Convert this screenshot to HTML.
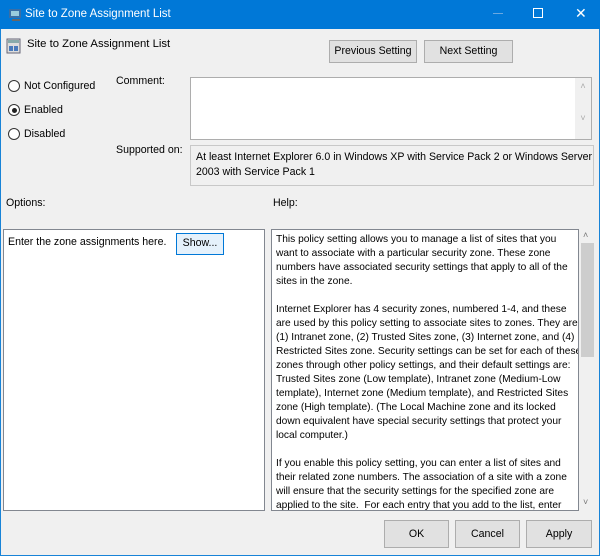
<!DOCTYPE html>
<html><head><style>
*{margin:0;padding:0;box-sizing:border-box}
body{width:600px;height:556px;background:#f0f0f0;font-family:"Liberation Sans",sans-serif;font-size:10.6px;color:#000;position:relative;overflow:hidden}
.a{position:absolute;white-space:nowrap}
.btn{position:absolute;background:#e1e1e1;border:1px solid #adadad;text-align:center;font-size:10.6px}
.box{position:absolute;background:#fff;border:1px solid #adadad}
.rad{position:absolute;width:12px;height:12px;border:1px solid #333;border-radius:50%;background:#fff}
.help div{height:14px}
</style></head><body>
<div class="a" style="left:0;top:0;width:600px;height:556px;border:1px solid #1883d7"></div>
<div class="a" style="left:0;top:0;width:600px;height:29px;background:#0078d7"></div>
<svg class="a" style="left:8px;top:7px" width="16" height="16"><rect x="1" y="2" width="12" height="9" fill="#3a6ea5"/><rect x="3" y="4" width="8" height="5" fill="#9cd"/><rect x="4" y="12" width="8" height="2" fill="#666"/></svg>
<div class="a" style="left:25px;top:8px;color:#fff;font-size:11.5px">Site to Zone Assignment List</div>
<div class="a" style="left:493px;top:13px;width:10px;height:1px;background:#6aa8e0"></div>
<div class="a" style="left:533px;top:8px;width:10px;height:10px;border:1px solid #fff"></div>
<div class="a" style="left:575px;top:5px;color:#fff;font-size:14px">✕</div>
<svg class="a" style="left:6px;top:38px" width="16" height="16"><rect x="1" y="1" width="13" height="14" fill="#ddd" stroke="#667"/><rect x="2" y="2" width="11" height="3" fill="#8aa"/><rect x="3" y="8" width="4" height="5" fill="#4a7bbb"/><rect x="8" y="8" width="4" height="5" fill="#4a7bbb"/></svg>
<div class="a" style="left:27px;top:38px;font-size:11.3px">Site to Zone Assignment List</div>
<div class="btn" style="left:329px;top:40px;width:88px;height:23px;line-height:21px">Previous Setting</div>
<div class="btn" style="left:424px;top:40px;width:89px;height:23px;line-height:21px">Next Setting</div>
<div class="rad" style="left:8px;top:80px"></div><div class="a" style="left:24px;top:80px">Not Configured</div>
<div class="rad" style="left:8px;top:104px"><div style="position:absolute;left:2.5px;top:2.5px;width:5px;height:5px;border-radius:50%;background:#222"></div></div><div class="a" style="left:24px;top:104px">Enabled</div>
<div class="rad" style="left:8px;top:128px"></div><div class="a" style="left:24px;top:128px">Disabled</div>
<div class="a" style="left:116px;top:75px">Comment:</div>
<div class="box" style="left:190px;top:77px;width:402px;height:63px"><div style="position:absolute;right:0;top:0;width:16px;height:61px;background:#f0f0f0;color:#aaa;font-size:9px;text-align:center;line-height:16px">˄<br><br>˅</div></div>
<div class="a" style="left:116px;top:144px">Supported on:</div>
<div class="box" style="left:190px;top:145px;width:404px;height:41px;background:#f0f0f0;border-color:#c8c8c8"><div style="position:absolute;left:5px;top:4px;line-height:14.5px;white-space:nowrap">At least Internet Explorer 6.0 in Windows XP with Service Pack 2 or Windows Server<br>2003 with Service Pack 1</div></div>
<div class="a" style="left:6px;top:197px">Options:</div>
<div class="a" style="left:273px;top:197px">Help:</div>
<div class="box" style="left:3px;top:229px;width:262px;height:282px;border-color:#828790"></div>
<div class="a" style="left:8px;top:236px">Enter the zone assignments here.</div>
<div class="btn" style="left:176px;top:233px;width:48px;height:22px;line-height:19px;border:1px solid #0078d7;background:#e5f1fb">Show...</div>
<div class="box help" style="left:271px;top:229px;width:308px;height:282px;border-color:#828790;padding:3px 0 0 4px;white-space:nowrap;line-height:14px;overflow:hidden;font-size:10.2px">
<div>This policy setting allows you to manage a list of sites that you</div>
<div>want to associate with a particular security zone. These zone</div>
<div>numbers have associated security settings that apply to all of the</div>
<div>sites in the zone.</div><div></div>
<div>Internet Explorer has 4 security zones, numbered 1-4, and these</div>
<div>are used by this policy setting to associate sites to zones. They are:</div>
<div>(1) Intranet zone, (2) Trusted Sites zone, (3) Internet zone, and (4)</div>
<div>Restricted Sites zone. Security settings can be set for each of these</div>
<div>zones through other policy settings, and their default settings are:</div>
<div>Trusted Sites zone (Low template), Intranet zone (Medium-Low</div>
<div>template), Internet zone (Medium template), and Restricted Sites</div>
<div>zone (High template). (The Local Machine zone and its locked</div>
<div>down equivalent have special security settings that protect your</div>
<div>local computer.)</div><div></div>
<div>If you enable this policy setting, you can enter a list of sites and</div>
<div>their related zone numbers. The association of a site with a zone</div>
<div>will ensure that the security settings for the specified zone are</div>
<div>applied to the site.&nbsp; For each entry that you add to the list, enter</div>
</div>
<div class="a" style="left:580px;top:229px;width:15px;height:282px;background:#f0f0f0"></div>
<div class="a" style="left:583px;top:230px;color:#777;font-size:9px">˄</div>
<div class="a" style="left:581px;top:243px;width:13px;height:114px;background:#cdcdcd"></div>
<div class="a" style="left:583px;top:497px;color:#777;font-size:9px">˅</div>
<div class="btn" style="left:384px;top:520px;width:65px;height:28px;line-height:26px">OK</div>
<div class="btn" style="left:455px;top:520px;width:65px;height:28px;line-height:26px">Cancel</div>
<div class="btn" style="left:526px;top:520px;width:66px;height:28px;line-height:26px">Apply</div>
</body></html>
